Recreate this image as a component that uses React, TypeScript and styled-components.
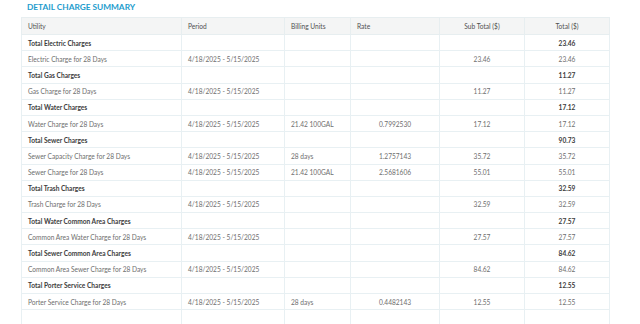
import styled, { createGlobalStyle } from 'styled-components'

const GlobalStyle = createGlobalStyle`
  body {
    margin: 0;
    background: #ffffff;
    font-family: Lato, 'Open Sans', sans-serif;
  }
`

const Main = styled.main`
  padding-left: 21px;
  width: 588px;
`

const Title = styled.h2`
  margin: 0;
  padding-left: 6px;
  height: 17px;
  line-height: 14px;
  font-size: 8.3px;
  font-weight: 700;
  color: #1c9ccd;
`

const Table = styled.table`
  width: 588px;
  table-layout: fixed;
  border-collapse: collapse;
  font-size: 6.6px;
`

const HeadCell = styled.th<{ $align?: string }>`
  height: 16px;
  padding: 0 6px;
  background: #f4f5f5;
  border: 1px solid #e7eef0;
  font-weight: 400;
  color: #505050;
  text-align: ${(p) => p.$align || 'left'};
`

const Row = styled.tr`
  height: 16.2px;
`

const Cell = styled.td<{ $align?: string; $bold?: boolean }>`
  padding: 0 6px;
  border: 1px solid #e8f0f3;
  white-space: nowrap;
  overflow: hidden;
  text-align: ${(p) => p.$align || 'left'};
  font-weight: ${(p) => (p.$bold ? 700 : 400)};
  color: ${(p) => (p.$bold ? '#3c3c3c' : '#6e6e6e')};
`

type Line = {
  name: string
  period?: string
  units?: string
  rate?: string
  sub?: string
  total: string
  bold?: boolean
}

const PERIOD = '4/18/2025 - 5/15/2025'

const lines: Line[] = [
  { name: 'Total Electric Charges', total: '23.46', bold: true },
  { name: 'Electric Charge for 28 Days', period: PERIOD, sub: '23.46', total: '23.46' },
  { name: 'Total Gas Charges', total: '11.27', bold: true },
  { name: 'Gas Charge for 28 Days', period: PERIOD, sub: '11.27', total: '11.27' },
  { name: 'Total Water Charges', total: '17.12', bold: true },
  { name: 'Water Charge for 28 Days', period: PERIOD, units: '21.42 100GAL', rate: '0.7992530', sub: '17.12', total: '17.12' },
  { name: 'Total Sewer Charges', total: '90.73', bold: true },
  { name: 'Sewer Capacity Charge for 28 Days', period: PERIOD, units: '28 days', rate: '1.2757143', sub: '35.72', total: '35.72' },
  { name: 'Sewer Charge for 28 Days', period: PERIOD, units: '21.42 100GAL', rate: '2.5681606', sub: '55.01', total: '55.01' },
  { name: 'Total Trash Charges', total: '32.59', bold: true },
  { name: 'Trash Charge for 28 Days', period: PERIOD, sub: '32.59', total: '32.59' },
  { name: 'Total Water Common Area Charges', total: '27.57', bold: true },
  { name: 'Common Area Water Charge for 28 Days', period: PERIOD, sub: '27.57', total: '27.57' },
  { name: 'Total Sewer Common Area Charges', total: '84.62', bold: true },
  { name: 'Common Area Sewer Charge for 28 Days', period: PERIOD, sub: '84.62', total: '84.62' },
  { name: 'Total Porter Service Charges', total: '12.55', bold: true },
  { name: 'Porter Service Charge for 28 Days', period: PERIOD, units: '28 days', rate: '0.4482143', sub: '12.55', total: '12.55' },
  { name: '', total: '' },
]

const App = () => (
  <Main>
    <GlobalStyle />
    <Title>DETAIL CHARGE SUMMARY</Title>
    <Table>
      <colgroup>
        <col style={{ width: 160 }} />
        <col style={{ width: 103 }} />
        <col style={{ width: 66 }} />
        <col style={{ width: 89 }} />
        <col style={{ width: 85 }} />
        <col style={{ width: 85 }} />
      </colgroup>
      <thead>
        <tr>
          <HeadCell>Utility</HeadCell>
          <HeadCell>Period</HeadCell>
          <HeadCell>Billing Units</HeadCell>
          <HeadCell>Rate</HeadCell>
          <HeadCell $align='center'>Sub Total ($)</HeadCell>
          <HeadCell $align='center'>Total ($)</HeadCell>
        </tr>
      </thead>
      <tbody>
        {lines.map((l, i) => (
          <Row key={i}>
            <Cell $bold={l.bold}>{l.name}</Cell>
            <Cell>{l.period}</Cell>
            <Cell>{l.units}</Cell>
            <Cell $align='center'>{l.rate}</Cell>
            <Cell $align='center'>{l.sub}</Cell>
            <Cell $align='center' $bold={l.bold}>{l.total}</Cell>
          </Row>
        ))}
      </tbody>
    </Table>
  </Main>
)

export default App
